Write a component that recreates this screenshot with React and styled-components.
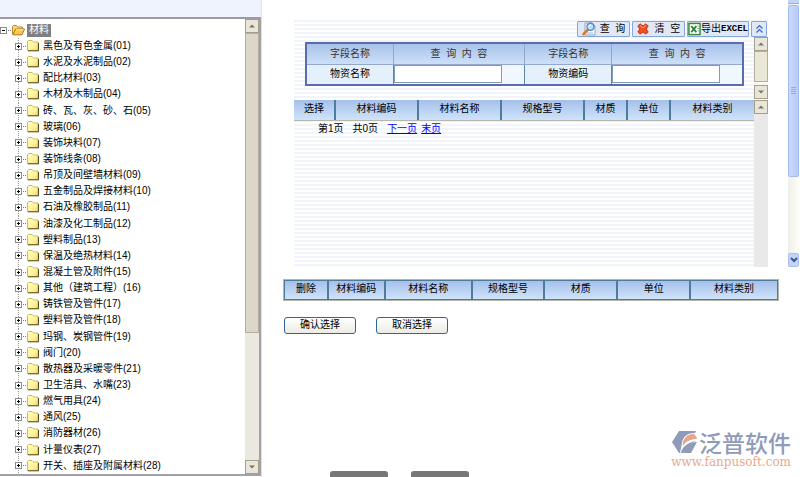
import React, { useState } from "react";
import styled, { createGlobalStyle } from "styled-components";

const GlobalStyle = createGlobalStyle`
    * {
        box-sizing: border-box;
    }

    body {
        margin: 0;
        background-color: #fff;
        color: #000;
        font-family: "Liberation Sans", "Noto Sans CJK SC", sans-serif;
        font-size: 10px;
        line-height: 12px;
    }
`;

const Page = styled.div`
    display: flex;
    height: 100vh;
    overflow: hidden;
`;

// left side
const Sidebar = styled.aside`
    display: flex;
    flex-direction: column;
    flex: none;
    width: 262px;
    border-right: 1px solid #e4e2dc;
`;

const SidebarHeader = styled.div`
    flex: none;
    height: 17px;
    background-color: #eff3fd;
`;

const TreeFrame = styled.div`
    display: flex;
    flex: 1;
    min-height: 0;
    margin-bottom: 1px;
    border-top: 2px solid #9c9aa4;
    border-right: 2px solid #a3a1a6;
    border-bottom: 2px solid #a3a1a6;
`;

const Tree = styled.div`
    display: flex;
    flex-direction: column;
    flex: 1;
    padding-top: 3px;
`;

const RootRow = styled.div`
    display: flex;
    align-items: center;
    flex: none;
    height: 16px;
`;

const RootLabel = styled.span`
    margin-left: 2px;
    padding: 0 2px 1px;
    background-color: #808080;
    color: #fff;
`;

const Branch = styled.ul`
    display: flex;
    flex-direction: column;
    flex: 1;
    min-height: 0;
    margin: 0;
    padding: 0 0 0 15px;
    list-style: none;
`;

const TreeItem = styled.li`
    display: flex;
    align-items: center;
    flex: 1;
    min-height: 0;
    background: repeating-linear-gradient(#999 0 1px, transparent 1px 2px) 3px 0 / 1px 100% no-repeat;
`;

const Toggle = styled.button`
    display: flex;
    flex: none;
    padding: 0;
    border: none;
    background: none;
    cursor: pointer;
`;

const ItemLabel = styled.span`
    margin-left: 4px;
    white-space: nowrap;
`;

// scrollbars
const Bar = styled.div`
    display: flex;
    flex-direction: column;
    flex: none;
    width: 14px;
    background-color: ${(props) => props.$track || "#ebe8df"};
`;

const Arrow = styled.button`
    display: flex;
    align-items: center;
    justify-content: center;
    flex: none;
    height: 14px;
    padding: 0;
    border: 1px solid #a5a08c;
    background-color: #e9e6d9;
`;

const Thumb = styled.div`
    flex: ${(props) => props.$size};
    border: 1px solid #b3ae9f;
    background-color: ${(props) => props.$color || "#ddd7cb"};
`;

const Rest = styled.div`
    flex: ${(props) => props.$size};
`;

// right side
const Main = styled.main`
    display: flex;
    flex-direction: column;
    flex: 1;
    min-width: 0;
`;

const Upper = styled.section`
    display: flex;
    flex: none;
    height: 267px;
`;

const Striped = styled.div`
    flex: 1;
    display: flex;
    flex-direction: column;
    margin: 20px 20px 0 32px;
    background: repeating-linear-gradient(#f1f4fb 0 2px, #fff 2px 4px);
`;

const Toolbar = styled.div`
    display: flex;
    justify-content: flex-end;
    gap: 2px;
    padding: 1px 1px 0 0;
`;

const ToolButton = styled.button`
    display: flex;
    align-items: center;
    justify-content: center;
    gap: ${(props) => (props.$tight ? "0" : "3px")};
    width: ${(props) => props.$width};
    height: 16px;
    padding: 0;
    border: 1px solid #85a5e2;
    border-radius: 1px;
    background-color: #e0e8f6;
    color: #000;
    font: inherit;
    white-space: pre;
    cursor: pointer;
`;

const MonoText = styled.span`
    font-family: "Liberation Mono", monospace;
    font-size: 9px;
    font-weight: bold;
`;

const QueryArea = styled.form`
    display: flex;
    height: 62px;
`;

const QueryBody = styled.div`
    flex: 1;
    padding: 5px 10px 0 11px;
`;

const QueryTable = styled.table`
    width: 100%;
    table-layout: fixed;
    border-collapse: collapse;
    border: 2px solid #5a6cab;
`;

const QueryHead = styled.th`
    width: ${(props) => props.$width};
    height: 21px;
    padding: 0;
    border: 1px solid #93a7cf;
    background: linear-gradient(#a9c2ea, #cce0f8);
    color: #333;
    font-weight: normal;
    white-space: pre;
`;

const QueryCell = styled.td`
    height: 21px;
    padding: 0;
    border-right: 1px solid #5d86ab;
    background-color: ${(props) => (props.$label ? "#e4f1fc" : "#f1f7fe")};
    text-align: ${(props) => (props.$label ? "center" : "left")};
`;

const QueryInput = styled.input`
    display: block;
    width: 108px;
    height: 18px;
    padding: 0 2px;
    border: 1px solid #7f9db9;
    background-color: #fff;
    font: inherit;
`;

const ResultArea = styled.div`
    display: flex;
    flex: 1;
    margin-top: 1px;
`;

const Results = styled.div`
    flex: 1;
`;

const ListTable = styled.table`
    width: 100%;
    border-spacing: 0;
    table-layout: fixed;
    border: ${(props) => (props.$framed ? "1px solid #b3b6a8" : "none")};
    border-bottom: 1px solid #b3b6a8;
`;

const ListHead = styled.th`
    width: ${(props) => props.$share}%;
    height: 20px;
    padding: 0 0 2px;
    border: 0 solid #4d7c9d;
    border-width: ${(props) => (props.$framed ? "1px" : "0 2px 0 0")};
    background: linear-gradient(#a5c0ea, #cfe3fa);
    font-weight: normal;

    &:last-child {
        border-right-width: ${(props) => (props.$framed ? "1px" : "0")};
    }
`;

const Pager = styled.nav`
    display: flex;
    padding: 2px 0 0 24px;

    span {
        margin-right: 9px;
    }

    a {
        margin-right: 4px;
        color: #00f;
    }
`;

const BlueBar = styled.div`
    display: flex;
    flex-direction: column;
    flex: none;
    width: 11px;
    margin-right: 1px;
    background: linear-gradient(90deg, #f0efe8, #fdfdfa);
`;

const BlueTop = styled.div`
    flex: none;
    height: 4px;
    border-bottom: 1px solid #93aee8;
    background-color: #c3d4fc;
`;

const BlueThumb = styled.div`
    display: flex;
    align-items: center;
    justify-content: center;
    flex: 172;
    margin-top: 1px;
    border: 1px solid #a3bbf3;
    border-radius: 2px;
    background: linear-gradient(90deg, #cbdafd, #b7cbf9);
`;

const BlueArrow = styled.button`
    display: flex;
    align-items: center;
    justify-content: center;
    flex: none;
    height: 14px;
    padding: 0;
    border: 1px solid #a9bff2;
    border-radius: 2px;
    background-color: #c3d4fc;
`;

const Chosen = styled.section`
    flex: 1;
    padding: 12px 21px 0 21px;
`;

const Actions = styled.div`
    display: flex;
    gap: 20px;
    margin-top: 16px;
    padding-left: 1px;
`;

const ActionButton = styled.button`
    width: 72px;
    height: 17px;
    padding: 0 0 2px;
    border: 1px solid #2f659a;
    border-radius: 3px;
    background: linear-gradient(#fff, #ecebe4);
    color: #000;
    font: inherit;
    cursor: pointer;
`;

const Brand = styled.a`
    align-self: flex-end;
    margin-right: 9px;
    color: #e9a88c;
    text-decoration: none;
`;

const BrandTop = styled.div`
    display: flex;
    align-items: center;
    justify-content: flex-end;
    gap: 2px;
    color: #8f9bb9;
    font-family: "Noto Sans CJK SC", sans-serif;
    font-size: 23px;
    font-weight: 500;
    line-height: 28px;
`;

const BrandUrl = styled.div`
    font-family: "DejaVu Serif", serif;
    font-size: 12px;
    line-height: 12px;
    text-align: right;
`;

const BottomTabs = styled.div`
    display: flex;
    gap: 23px;
    padding: 3px 0 0 68px;
`;

const BottomTab = styled.div`
    width: 58px;
    height: 6px;
    border-radius: 3px 3px 0 0;
    background-color: #777;
`;

const categories = [
    ["黑色及有色金属", "01"],
    ["水泥及水泥制品", "02"],
    ["配比材料", "03"],
    ["木材及木制品", "04"],
    ["砖、瓦、灰、砂、石", "05"],
    ["玻璃", "06"],
    ["装饰块料", "07"],
    ["装饰线条", "08"],
    ["吊顶及间壁墙材料", "09"],
    ["五金制品及焊接材料", "10"],
    ["石油及橡胶制品", "11"],
    ["油漆及化工制品", "12"],
    ["塑料制品", "13"],
    ["保温及绝热材料", "14"],
    ["混凝土管及附件", "15"],
    ["其他（建筑工程）", "16"],
    ["铸铁管及管件", "17"],
    ["塑料管及管件", "18"],
    ["玛钢、炭钢管件", "19"],
    ["阀门", "20"],
    ["散热器及采暖零件", "21"],
    ["卫生洁具、水嘴", "23"],
    ["燃气用具", "24"],
    ["通风", "25"],
    ["消防器材", "26"],
    ["计量仪表", "27"],
    ["开关、插座及附属材料", "28"],
];

// title and relative width
const resultColumns = [
    ["选择", 42],
    ["材料编码", 83],
    ["材料名称", 83],
    ["规格型号", 83],
    ["材质", 43],
    ["单位", 43],
    ["材料类别", 83],
];

const chosenColumns = [
    ["删除", 44],
    ["材料编码", 57],
    ["材料名称", 87],
    ["规格型号", 73],
    ["材质", 73],
    ["单位", 73],
    ["材料类别", 88],
];

const ToggleIcon = ({ open }) => (
    <svg width="12" height="9" viewBox="0 0 12 9" shapeRendering="crispEdges">
        <rect x="0.5" y="1.5" width="6" height="6" fill="#fff" stroke="#8c8c8c" />
        <path d={open ? "M2 4.5H5" : "M2 4.5H5M3.5 3V6"} stroke="#000" />
        <path d="M8 4.5H9M10 4.5H11" stroke="#777" />
    </svg>
);

const FolderIcon = () => (
    <svg width="12" height="12" viewBox="0 0 12 12">
        <defs>
            <linearGradient id="folder" x1="0" y1="0" x2="1" y2="1">
                <stop offset="0" stopColor="#ffffc0" />
                <stop offset="0.6" stopColor="#fff29a" />
                <stop offset="1" stopColor="#f3cf78" />
            </linearGradient>
        </defs>
        <path d="M0.5 10.5V1.5L1.5 0.5H5L6.5 2H11V10.5Z" fill="url(#folder)" stroke="#c8bd50" />
        <path d="M1 10.8H11.5V3" fill="none" stroke="#56501d" />
    </svg>
);

const OpenFolderIcon = () => (
    <svg width="13" height="12" viewBox="0 0 13 12">
        <path d="M0.5 10V2.5L1.5 1.5H4.5L6 3H10.5V5" fill="#f8d66b" stroke="#b88d2c" />
        <path d="M0.8 10.8L3.5 5H12.5L10 10.8Z" fill="#fcc84c" stroke="#a8741c" />
        <path d="M4 5.8H11.5" stroke="#fff0a8" />
    </svg>
);

const SearchIcon = () => (
    <svg width="15" height="14" viewBox="0 0 15 14">
        <path d="M3 1H10L13 4V13H3Z" fill="#f5f9ff" stroke="#8ea9d4" />
        <path d="M5 11H11" stroke="#9ab8e8" />
        <path d="M6 7.5L1.5 12.2" stroke="#e27a16" strokeWidth="2.6" strokeLinecap="round" />
        <circle cx="8.5" cy="4.8" r="3.5" fill="#bfe0fb" stroke="#5687c8" strokeWidth="1.4" />
        <path d="M6.8 4.5Q7.3 3 9 3" fill="none" stroke="#fff" />
    </svg>
);

const ClearIcon = () => (
    <svg width="12" height="12" viewBox="0 0 12 12">
        <path
            d="M0.8 3L3 0.8L6 3L9 0.8L11.2 3L9.2 6L11.2 9L9 11.2L6 9L3 11.2L0.8 9L2.8 6Z"
            fill="#f0501f"
            stroke="#c8391a"
            strokeLinejoin="round"
        />
        <path d="M3 2.5L6 4.8L9 2.5" fill="none" stroke="#ff9870" />
    </svg>
);

const ExcelIcon = () => (
    <svg width="14" height="14" viewBox="0 0 14 14">
        <rect x="1" y="1" width="12" height="12" fill="#fff" stroke="#3c8a3e" strokeWidth="1.6" />
        <path d="M10 4H12M10 6.5H12M10 9H12" stroke="#80b580" />
        <path d="M3.5 4L9 10.5M9 4L3.5 10.5" stroke="#278434" strokeWidth="2" />
    </svg>
);

const CollapseIcon = () => (
    <svg width="9" height="10" viewBox="0 0 9 10">
        <path d="M1.5 4.5L4.5 1.5L7.5 4.5M1.5 8.5L4.5 5.5L7.5 8.5" fill="none" stroke="#3967c4" strokeWidth="1.2" />
    </svg>
);

const ArrowIcon = ({ down }) => (
    <svg width="6" height="4" viewBox="0 0 6 4">
        <path d={down ? "M0 0.5H6L3 3.5Z" : "M0 3.5H6L3 0.5Z"} fill="#77736a" />
    </svg>
);

const BrandIcon = () => (
    <svg width="25" height="23" viewBox="0 0 25 23">
        <path d="M7 0H24L23 2C16 2 11 5 10 12L8 22H7L0 11Z" fill="#8f9bb9" />
        <path d="M11 15C10 8 15 3 21 3C23 3 24 5 25 8C19 8 14 10 11 15Z" fill="#e6a58c" />
        <path d="M25 11L19 22H12C13 16 18 11 25 11Z" fill="#8f9bb9" />
        <path d="M9 22C10 16 16 11 24 10C17 13 14 17 12 22Z" fill="#8f9bb9" />
    </svg>
);

const ScrollBar = ({ track, color, thumb, rest }) => (
    <Bar $track={track}>
        <Arrow type="button" aria-label="向上">
            <ArrowIcon />
        </Arrow>
        <Thumb $size={thumb} $color={color} />
        <Rest $size={rest} />
        <Arrow type="button" aria-label="向下">
            <ArrowIcon down />
        </Arrow>
    </Bar>
);

const HeaderTable = ({ columns, framed }) => {
    const total = columns.reduce((sum, [, width]) => sum + width, 0);

    return (
        <ListTable $framed={framed}>
            <thead>
                <tr>
                    {columns.map(([title, width]) => (
                        <ListHead key={title} scope="col" $share={(width / total) * 100} $framed={framed}>
                            {title}
                        </ListHead>
                    ))}
                </tr>
            </thead>
        </ListTable>
    );
};

const App = () => {
    const [name, setName] = useState("");
    const [code, setCode] = useState("");

    const onClear = () => {
        setName("");
        setCode("");
    };

    return (
        <Page>
            <GlobalStyle />
            <Sidebar>
                <SidebarHeader />
                <TreeFrame>
                    <Tree>
                        <RootRow>
                            <Toggle type="button" aria-label="收起">
                                <ToggleIcon open />
                            </Toggle>
                            <OpenFolderIcon />
                            <RootLabel>材料</RootLabel>
                        </RootRow>
                        <Branch>
                            {categories.map(([title, no]) => (
                                <TreeItem key={no}>
                                    <Toggle type="button" aria-label="展开">
                                        <ToggleIcon />
                                    </Toggle>
                                    <FolderIcon />
                                    <ItemLabel>{title}({no})</ItemLabel>
                                </TreeItem>
                            ))}
                        </Branch>
                    </Tree>
                    <ScrollBar thumb={300} rest={128} />
                </TreeFrame>
            </Sidebar>

            <Main>
                <Upper>
                    <Striped>
                        <Toolbar>
                            <ToolButton type="submit" form="query" $width="53px">
                                <SearchIcon />查  询
                            </ToolButton>
                            <ToolButton type="button" $width="53px" onClick={onClear}>
                                <ClearIcon /> 清  空
                            </ToolButton>
                            <ToolButton type="button" $width="62px" $tight>
                                <ExcelIcon />导出<MonoText>EXCEL</MonoText>
                            </ToolButton>
                            <ToolButton type="button" $width="16px" aria-label="收起查询">
                                <CollapseIcon />
                            </ToolButton>
                        </Toolbar>
                        <QueryArea id="query" onSubmit={(e) => e.preventDefault()}>
                            <QueryBody>
                                <QueryTable>
                                    <thead>
                                        <tr>
                                            <QueryHead $width="20%">字段名称</QueryHead>
                                            <QueryHead $width="30%">查  询  内  容</QueryHead>
                                            <QueryHead $width="20%">字段名称</QueryHead>
                                            <QueryHead $width="30%">查  询  内  容</QueryHead>
                                        </tr>
                                    </thead>
                                    <tbody>
                                        <tr>
                                            <QueryCell $label>
                                                <label htmlFor="name">物资名称</label>
                                            </QueryCell>
                                            <QueryCell>
                                                <QueryInput id="name" value={name} onChange={(e) => setName(e.target.value)} />
                                            </QueryCell>
                                            <QueryCell $label>
                                                <label htmlFor="code">物资编码</label>
                                            </QueryCell>
                                            <QueryCell>
                                                <QueryInput id="code" value={code} onChange={(e) => setCode(e.target.value)} />
                                            </QueryCell>
                                        </tr>
                                    </tbody>
                                </QueryTable>
                            </QueryBody>
                            <ScrollBar thumb={30} rest={3} color="#ebe7d6" track="#f7f6f2" />
                        </QueryArea>
                        <ResultArea>
                            <Results>
                                <HeaderTable columns={resultColumns} />
                                <Pager>
                                    <span>第1页</span>
                                    <span>共0页</span>
                                    <a href="#next">下一页</a>
                                    <a href="#last">末页</a>
                                </Pager>
                            </Results>
                            <Bar $track="#e9e9e9">
                                <Arrow type="button" aria-label="向上">
                                    <ArrowIcon />
                                </Arrow>
                            </Bar>
                        </ResultArea>
                    </Striped>
                    <BlueBar>
                        <BlueTop />
                        <BlueThumb>
                            <svg width="6" height="7" viewBox="0 0 6 7" shapeRendering="crispEdges">
                                <path d="M0 0.5H5M0 2.5H5M0 4.5H5M0 6.5H5" stroke="#8fabec" />
                            </svg>
                        </BlueThumb>
                        <Rest $size={77} />
                        <BlueArrow type="button" aria-label="向下">
                            <svg width="8" height="6" viewBox="0 0 8 6">
                                <path d="M1 1L4 4L7 1" fill="none" stroke="#3f5584" strokeWidth="2" />
                            </svg>
                        </BlueArrow>
                    </BlueBar>
                </Upper>

                <Chosen>
                    <HeaderTable columns={chosenColumns} framed />
                    <Actions>
                        <ActionButton type="button">确认选择</ActionButton>
                        <ActionButton type="button">取消选择</ActionButton>
                    </Actions>
                </Chosen>

                <Brand href="#home">
                    <BrandTop>
                        <BrandIcon />泛普软件
                    </BrandTop>
                    <BrandUrl>www.fanpusoft.com</BrandUrl>
                </Brand>
                <BottomTabs>
                    <BottomTab />
                    <BottomTab />
                </BottomTabs>
            </Main>
        </Page>
    );
};

export default App;
